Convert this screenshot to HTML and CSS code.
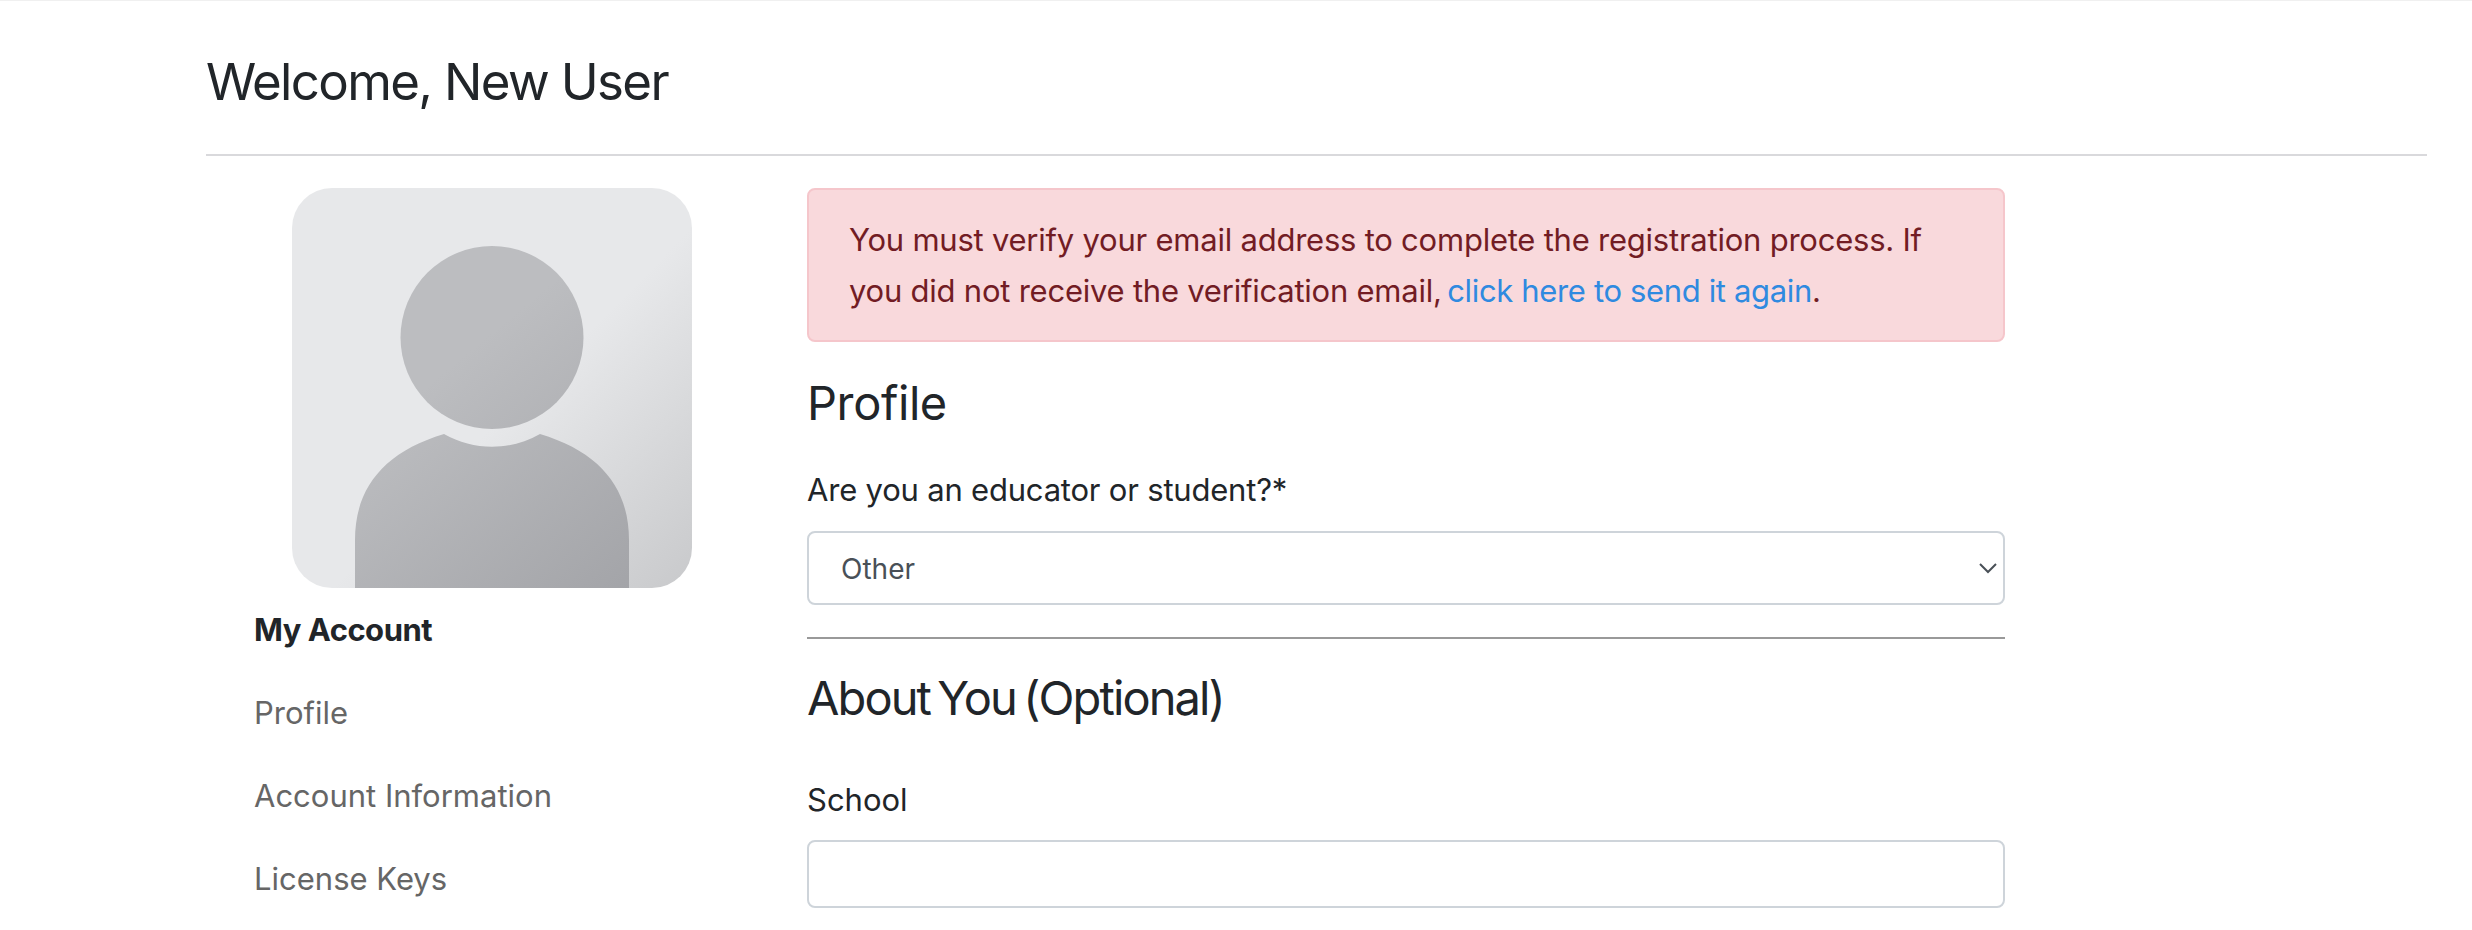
FILE: index.html
```html
<!DOCTYPE html>
<html lang="en">
<head>
    <meta charset="UTF-8">
    <meta name="viewport" content="width=device-width, initial-scale=1.0">
    <title>Welcome, New User</title>
    <link rel="stylesheet" href="styles.css">
</head>

<body>
    <div class="page">
        <h1 class="page-title">Welcome, New User</h1>
        <div class="content">
            <aside class="sidebar">
                <svg class="avatar" viewBox="0 0 400 400" role="img" aria-label="Profile picture">
                    <defs>
                        <linearGradient id="avatarBg" x1="0" y1="0" x2="1" y2="1">
                            <stop offset="0.55" stop-color="#e7e8ea"/>
                            <stop offset="1" stop-color="#c8c9cb"/>
                        </linearGradient>
                        <linearGradient id="avatarFg" gradientUnits="userSpaceOnUse" x1="60" y1="60" x2="340" y2="400">
                            <stop offset="0.35" stop-color="#bcbdc0"/>
                            <stop offset="1" stop-color="#a3a4a8"/>
                        </linearGradient>
                    </defs>
                    <rect width="400" height="400" rx="40" fill="url(#avatarBg)"/>
                    <circle cx="200" cy="149.5" r="91.5" fill="url(#avatarFg)"/>
                    <path d="M63 400V352C63 300 92 264 152 246C182 263 218 263 248 246C308 264 337 300 337 352V400Z" fill="url(#avatarFg)"/>
                </svg>
                <nav class="side-nav">
                    <a class="side-link side-link-active" href="#">My Account</a>
                    <a class="side-link" href="#">Profile</a>
                    <a class="side-link" href="#">Account Information</a>
                    <a class="side-link" href="#">License Keys</a>
                </nav>
            </aside>

            <main class="main">
                <div class="alert">
                    You must verify your email address to complete the registration process. If you did not receive the verification email, <a href="#">click here to send it again</a>.
                </div>

                <h2 class="section-title">Profile</h2>
                <label class="field-label" for="role">Are you an educator or student?*</label>
                <div class="select-wrap">
                    <select class="field select" id="role">
                        <option>Other</option>
                    </select>
                    <svg class="select-arrow" viewBox="0 0 18 12">
                        <path d="M1 2l8 8 8-8" fill="none" stroke="#495057" stroke-width="2"/>
                    </svg>
                </div>

                <hr class="divider">

                <h2 class="section-title section-title-about">About You (Optional)</h2>
                <label class="field-label field-label-school" for="school">School</label>
                <input class="field input" id="school" type="text">
            </main>
        </div>
    </div>
</body>
</html>
```

FILE: styles.css
```css
* {
    box-sizing: border-box;
}

html,
body {
    height: 100%;
}

body {
    margin: 0;
    overflow: hidden;
    background-color: #fff;
    color: #212529;
    font-family: 'Inter', 'Liberation Sans', sans-serif;
}

.page {
    border-top: 1px solid #f0f0f0;
    padding: 0 45px 0 206px;
}

.page-title {
    margin: 0;
    height: 155px;
    padding-top: 48px;
    border-bottom: 2px solid #d9d9dc;
    font-size: 51px;
    line-height: 66px;
    font-weight: 400;
    letter-spacing: -1.65px;
}

.content {
    display: flex;
    padding-top: 32px;
}

.sidebar {
    width: 601px;
    flex-shrink: 0;
}

.avatar {
    display: block;
    width: 400px;
    height: 400px;
    margin-left: 86px;
}

.side-nav {
    display: flex;
    flex-direction: column;
    padding: 21px 0 0 48px;
}

.side-link {
    height: 83px;
    line-height: 42px;
    font-size: 31px;
    color: #666;
    text-decoration: none;
}

.side-link-active {
    font-weight: 700;
    color: #212529;
    letter-spacing: -0.5px;
}

.main {
    width: 1198px;
}

.alert {
    height: 154px;
    padding: 24px 40px;
    background-color: #f9d9dc;
    border: 2px solid #f5c6cb;
    border-radius: 8px;
    color: #721c24;
    font-size: 31px;
    line-height: 51px;
    letter-spacing: -0.23px;
}

.alert a {
    margin-left: -3px;
    color: #2f8ae0;
    letter-spacing: -0.35px;
    text-decoration: none;
}

.section-title {
    margin: 32px 0 0;
    font-size: 47px;
    line-height: 58px;
    font-weight: 400;
    letter-spacing: -0.4px;
}

.section-title-about {
    margin-top: 30px;
    letter-spacing: -1.9px;
    word-spacing: -4px;
}

.field-label {
    display: block;
    margin-top: 38px;
    font-size: 31px;
    line-height: 40px;
    letter-spacing: -0.2px;
    color: #212529;
}

.field-label-school {
    margin-top: 53px;
    letter-spacing: 0;
}

.field {
    display: block;
    width: 100%;
    margin: 0;
    background-color: #fff;
    border: 2px solid #ced4da;
    border-radius: 8px;
    color: #495057;
    font-family: inherit;
    font-size: 28px;
    outline: none;
}

.select-wrap {
    position: relative;
    margin-top: 21px;
}

.select {
    height: 74px;
    padding: 2px 32px 0;
    appearance: none;
}

.select-arrow {
    position: absolute;
    right: 8px;
    top: 31px;
    width: 18px;
    height: 12px;
}

.divider {
    margin: 32px 0 0;
    height: 2px;
    border: 0;
    background-color: #999;
}

.input {
    height: 68px;
    margin-top: 20px;
    padding: 0 32px;
}
```
